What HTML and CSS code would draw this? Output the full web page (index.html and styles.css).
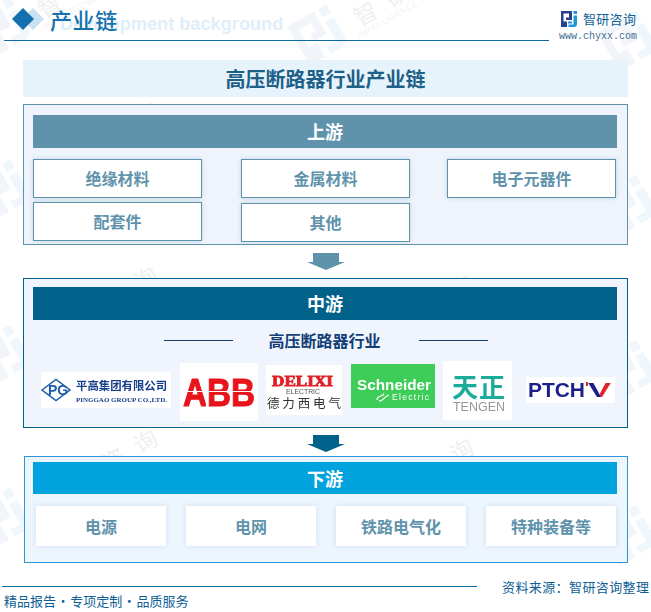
FILE: index.html
```html
<!DOCTYPE html>
<html lang="zh">
<head>
<meta charset="utf-8">
<title>高压断路器行业产业链</title>
<link rel="stylesheet" href="styles.css">
</head>
<body>
<div class="page">
  <svg class="watermark" width="651" height="612" viewBox="0 0 651 612" aria-hidden="true">
    <defs>
      <g id="wm">
        <g transform="rotate(-30)">
          <g transform="scale(.8)">
            <path class="wm-dark" d="M-28-28H10V4H-8V-6H0V-18H-18V8H-6V28H-28Z"/>
            <path class="wm-light" d="M16-28H28V-16H16ZM16-10H28V16Q28 28 16 28H2V18H16Z"/>
          </g>
          <text class="wm-cn" x="40" y="14">智研咨询</text>
          <text class="wm-en" x="35" y="24">INTELLIGENCE RESEARCH</text>
        </g>
      </g>
    </defs>
    <use href="#wm" x="2" y="27"/><use href="#wm" x="318" y="35"/><use href="#wm" x="628" y="41"/>
    <use href="#wm" x="2" y="190"/><use href="#wm" x="318" y="198"/><use href="#wm" x="628" y="205"/>
    <use href="#wm" x="2" y="355"/><use href="#wm" x="318" y="363"/><use href="#wm" x="628" y="370"/>
    <use href="#wm" x="2" y="518"/><use href="#wm" x="318" y="527"/><use href="#wm" x="628" y="535"/>
  </svg>

  <header class="header">
    <div class="head-main">
      <svg class="diamond" width="38" height="24" viewBox="0 0 38 24" aria-hidden="true">
        <path class="diamond-back" d="M22 1L33 12 22 23 11 12Z"/>
        <path class="diamond-front" d="M12 1L23 12 12 23 1 12Z"/>
      </svg>
      <h1 class="head-title">产业链</h1>
      <span class="head-ghost">Development background</span>
    </div>
    <div class="brand">
      <div class="brand-top">
        <svg class="brand-mark" width="16" height="16" viewBox="0 0 16 16" aria-hidden="true">
          <path class="mark-dark" d="M0 0H11V9H5V6.500H8V2.500H2.500V10.500H6V16H0Z"/>
          <path class="mark-light" d="M12.500 0H16V3H12.500ZM12.500 4.500H16V13Q16 16 13 16H7.500V13.500H12.500Z"/>
          <path class="mark-light" d="M7 10.500H11V12.500H7Z"/>
        </svg>
        <span class="brand-name">智研咨询</span>
      </div>
      <div class="brand-url">www.chyxx.com</div>
    </div>
  </header>

  <main class="main">
    <h2 class="chart-title">高压断路器行业产业链</h2>

    <section class="box box-up">
      <div class="bar bar-up">上游</div>
      <div class="up-grid">
        <div class="cell">绝缘材料</div>
        <div class="cell">金属材料</div>
        <div class="cell">电子元器件</div>
        <div class="cell">配套件</div>
        <div class="cell cell-low">其他</div>
      </div>
    </section>

    <svg class="arrow arrow-a" width="38" height="17" viewBox="0 0 38 17" aria-hidden="true"><path d="M6 0H32V9H38L19 17 0 9H6Z"/></svg>

    <section class="box box-mid">
      <div class="bar bar-mid">中游</div>
      <div class="subhead"><span class="subline"></span><span class="subtext">高压断路器行业</span><span class="subline"></span></div>
      <div class="logos">
        <svg class="logo" width="130" height="36" viewBox="0 0 130 36">
          <rect width="130" height="36" fill="#fff"/>
          <path d="M1 18L15 7.500 29 18 15 28.500Z" fill="none" stroke="#1f5fa8" stroke-width="1.500"/>
          <text x="7" y="23" class="pg-mark">PG</text>
          <text x="35" y="18" class="pg-cn">平高集团有限公司</text>
          <text x="35" y="29.500" class="pg-en" textLength="91" lengthAdjust="spacingAndGlyphs">PINGGAO GROUP CO.,LTD.</text>
        </svg>
        <svg class="logo logo-abb" width="78" height="58" viewBox="0 0 78 58">
          <rect width="78" height="58" fill="#fff"/>
          <text x="3" y="43" class="abb" textLength="72" lengthAdjust="spacingAndGlyphs">ABB</text>
          <path d="M0 28.500H78M26.500 14V44M51.500 14V44" stroke="#fff" stroke-width="1"/>
        </svg>
        <svg class="logo" width="76" height="50" viewBox="0 0 76 50">
          <rect width="76" height="50" fill="#fff"/>
          <text x="6" y="20.500" class="dlx" textLength="61" lengthAdjust="spacingAndGlyphs">DELIXI</text>
          <text x="20" y="29" class="dlx-en" textLength="34" lengthAdjust="spacingAndGlyphs">ELECTRIC</text>
          <text x="1" y="43" class="dlx-cn" textLength="74" lengthAdjust="spacing">德力西电气</text>
        </svg>
        <svg class="logo logo-se" width="84" height="44" viewBox="0 0 84 44">
          <rect width="84" height="44" fill="#3dcd58"/>
          <text x="6" y="26" class="se" textLength="74" lengthAdjust="spacingAndGlyphs">Schneider</text>
          <path d="M26 36C26 31 32 33 33 29.500M28 37C33 37 32 33 38 31" fill="none" stroke="#fff" stroke-width="1.300"/>
          <text x="41" y="35.500" class="se-e" textLength="37" lengthAdjust="spacing">Electric</text>
        </svg>
        <svg class="logo" width="69" height="59" viewBox="0 0 69 59">
          <rect width="69" height="59" fill="#fff"/>
          <text x="9" y="36" class="tz" textLength="53" lengthAdjust="spacing">天正</text>
          <text x="10" y="50" class="tz-en" textLength="52" lengthAdjust="spacingAndGlyphs">TENGEN</text>
        </svg>
        <svg class="logo logo-pt" width="89" height="26" viewBox="0 0 89 26">
          <defs><linearGradient id="vsplit" x1="0" x2="1" y1="0" y2="0"><stop offset=".5" stop-color="#1a1f8c"/><stop offset=".5" stop-color="#e0232c"/></linearGradient></defs>
          <rect width="89" height="26" fill="#fff"/>
          <text x="2" y="20" class="pt" textLength="57" lengthAdjust="spacingAndGlyphs">PTCH</text>
          <rect x="60" y="5" width="2" height="4" fill="#e0232c"/>
          <text x="62" y="20" class="pt pt-v" textLength="23" lengthAdjust="spacingAndGlyphs">V</text>
        </svg>
      </div>
    </section>

    <svg class="arrow arrow-b" width="38" height="17" viewBox="0 0 38 17" aria-hidden="true"><path d="M6 0H32V9H38L19 17 0 9H6Z"/></svg>

    <section class="box box-down">
      <div class="bar bar-down">下游</div>
      <div class="down-row">
        <div class="tile">电源</div>
        <div class="tile">电网</div>
        <div class="tile">铁路电气化</div>
        <div class="tile">特种装备等</div>
      </div>
    </section>
  </main>

  <footer class="footer">
    <div class="foot-top">
      <div class="foot-line"></div>
      <div class="foot-source">资料来源：智研咨询整理</div>
    </div>
    <div class="foot-slogan">精品报告 · 专项定制 · 品质服务</div>
  </footer>
</div>
</body>
</html>
```
FILE: styles.css
```css
* { box-sizing: border-box; }
html, body { margin: 0; padding: 0; background: #fff; }
body { font-family: "Noto Sans CJK SC", "Liberation Sans", sans-serif; }

.page { position: relative; width: 651px; height: 612px; overflow: hidden; }
.page > header, .page > main, .page > footer { position: relative; }

.watermark { position: absolute; left: 0; top: 0; }
.wm-dark { fill: #f1f4f8; }
.wm-light { fill: #eff7fc; }
.wm-cn { font-size: 23px; font-weight: 400; letter-spacing: 14px; fill: #f0f0f0; font-family: "Noto Sans CJK SC", sans-serif; }
.wm-en { font-size: 8px; fill: #f2f2f2; font-family: "Liberation Sans", sans-serif; letter-spacing: .8px; }

/* header */
.header { display: flex; height: 48px; }
.head-main { position: relative; display: flex; align-items: center; width: 545px; height: 41px; margin-left: 4px; border-bottom: 1px solid #0e6ca5; }
.diamond { flex: none; margin: -2px 0 0 7px; }
.diamond-back { fill: #c8e2f2; }
.diamond-front { fill: #136fae; }
.head-title { position: relative; z-index: 1; margin: -3px 0 0 1px; font-size: 22px; font-weight: 500; line-height: 30px; letter-spacing: .6px; color: #1570ab; }
.head-ghost { position: absolute; left: 56px; top: 14px; font-family: "Liberation Sans", sans-serif; font-size: 18.200px; font-weight: 700; line-height: 20px; white-space: nowrap; color: #dfeefa; }

.brand { margin-left: 10px; width: 92px; }
.brand-top { display: flex; align-items: center; height: 16px; margin-top: 11px; margin-left: 2px; }
.brand-mark { flex: none; }
.mark-dark { fill: #2c3f8f; }
.mark-light { fill: #1e96d8; }
.brand-name { margin-left: 6px; font-size: 13px; line-height: 16px; letter-spacing: .3px; color: #125f96; white-space: nowrap; }
.brand-url { margin-top: 4px; font-family: "Liberation Mono", monospace; font-size: 10px; line-height: 12px; color: #3f6f90; white-space: nowrap; }

/* main */
.main { padding: 0 23px; margin-top: 12px; }
.chart-title { height: 37px; margin: 0 0 7px; background: #e6f3fb; text-align: center; font-size: 20px; font-weight: 700; line-height: 37px; color: #1d6088; }

.box { border: 1px solid; }
.bar { width: 584px; text-align: center; font-weight: 700; font-size: 18px; color: #fff; }
.arrow { display: block; margin: 0 auto; }

.box-up { height: 141px; padding: 10px 9px 0; background: #eff4fc; border-color: #5f93ac; }
.bar-up { height: 33px; line-height: 33px; background: #5f93ac; }
.up-grid { display: grid; grid-template-columns: 208px 206px 169px; grid-auto-rows: 39px; row-gap: 4px; margin-top: 11px; }
.cell { width: 169px; background: #fff; border: 1.500px solid #5f93ac; box-shadow: 0 0 4px rgba(95, 147, 172, .35); text-align: center; font-size: 16px; font-weight: 700; line-height: 36px; color: #5f93ac; }
.cell-low { transform: translateY(1px); }

.arrow-a { margin-top: 8px; margin-bottom: 8px; fill: #5f93ac; }
.arrow-b { margin-top: 7px; margin-bottom: 4px; fill: #00628a; }

.box-mid { height: 150px; padding: 8px 9px 0; background: #f0f4fc; border-color: #00628a; }
.bar-mid { height: 33px; line-height: 33px; background: #00628a; }
.subhead { display: flex; align-items: center; justify-content: center; gap: 35px; height: 40px; width: 584px; margin-left: 1px; }
.subline { width: 69px; height: 1px; background: #123f6e; }
.subtext { margin-right: 3px; font-size: 16px; font-weight: 700; line-height: 24px; color: #123f78; }
.logos { display: flex; align-items: center; gap: 8.500px; height: 60px; padding-left: 8px; }
.logo { flex: none; display: block; filter: blur(.35px); }
.logo-abb { margin-top: 4px; }
.logo-se { margin-bottom: 8px; }
.logo-pt { margin-left: 5.500px; }

.pg-mark { font-family: "Liberation Sans", sans-serif; font-size: 14px; font-weight: 700; fill: #1f5fa8; }
.pg-cn { font-family: "Noto Sans CJK SC", sans-serif; font-size: 11.400px; font-weight: 700; fill: #173f8c; }
.pg-en { font-family: "Liberation Serif", serif; font-size: 7px; font-weight: 700; fill: #173f8c; }
.abb { font-family: "Liberation Sans", sans-serif; font-size: 38px; font-weight: 700; fill: #e8141c; stroke: #e8141c; stroke-width: 1; }
.dlx { font-family: "Liberation Serif", serif; font-size: 14px; font-weight: 700; fill: #e01f26; stroke: #e01f26; stroke-width: .8; }
.dlx-en { font-family: "Liberation Sans", sans-serif; font-size: 7.500px; fill: #555; }
.dlx-cn { font-family: "Noto Sans CJK SC", sans-serif; font-size: 12.500px; fill: #333; }
.se { font-family: "Liberation Sans", sans-serif; font-size: 15px; font-weight: 700; fill: #fff; }
.se-e { font-family: "Liberation Sans", sans-serif; font-size: 8.500px; fill: #fff; }
.tz { font-family: "Noto Sans CJK SC", sans-serif; font-size: 26px; font-weight: 700; fill: #1aab9b; }
.tz-en { font-family: "Liberation Sans", sans-serif; font-size: 12px; fill: #95989b; }
.pt { font-family: "Liberation Sans", sans-serif; font-size: 20px; font-weight: 700; fill: #1a1f8c; }
.pt-v { fill: url(#vsplit); }

.box-down { height: 107px; margin-left: 1px; padding: 5px 9px 0 8px; background: #eef6fd; border-color: #2e94d6; }
.bar-down { height: 32px; line-height: 32px; background: #00a3dd; }
.down-row { display: flex; gap: 20px; margin-top: 12px; padding-left: 3px; }
.tile { width: 130px; height: 40px; background: #fff; box-shadow: 0 0 6px rgba(120, 160, 210, .25); text-align: center; font-size: 16px; font-weight: 700; line-height: 40px; color: #5f93ac; }

/* footer */
.foot-top { display: flex; align-items: flex-end; height: 24px; }
.foot-line { width: 475px; height: 1px; margin-left: 2px; background: #0e6ca5; }
.foot-source { height: 20px; margin: 0 0 -10px 25px; font-size: 13px; line-height: 20px; letter-spacing: .4px; color: #0e5f96; white-space: nowrap; }
.foot-slogan { margin-top: 5px; padding-left: 4px; font-size: 13px; line-height: 18px; word-spacing: -2.300px; color: #0e5f96; white-space: nowrap; }
```
